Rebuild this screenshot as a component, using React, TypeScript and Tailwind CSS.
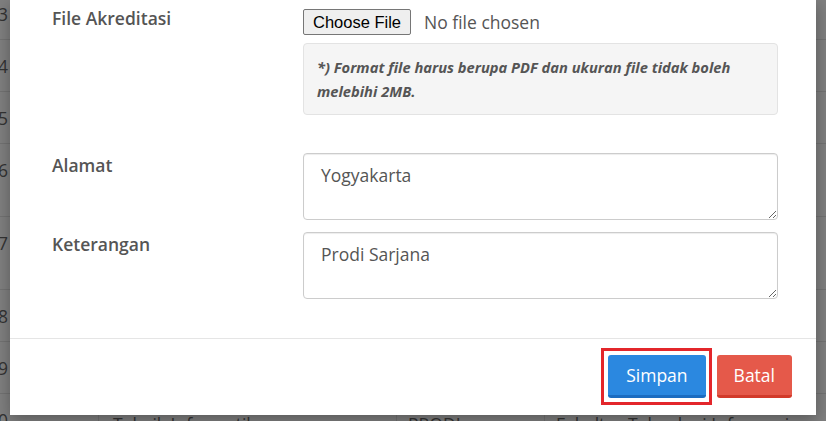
import React from "react";

const rows = [
  { no: 3, h: "h-[52px]", prodi: "Sistem Informasi", jenis: "PRODI", fak: "Fakultas Teknologi Informasi" },
  { no: 4, h: "h-[52px]", prodi: "Manajemen", jenis: "PRODI", fak: "Fakultas Ekonomi" },
  { no: 5, h: "h-[52px]", prodi: "Akuntansi", jenis: "PRODI", fak: "Fakultas Ekonomi" },
  { no: 6, h: "h-[73px]", prodi: "Teknik Komputer", jenis: "PRODI", fak: "Fakultas Teknologi Informasi" },
  { no: 7, h: "h-[73px]", prodi: "Desain Komunikasi Visual", jenis: "PRODI", fak: "Fakultas Seni" },
  { no: 8, h: "h-[52px]", prodi: "Ilmu Komunikasi", jenis: "PRODI", fak: "Fakultas Sosial" },
  { no: 9, h: "h-[52px]", prodi: "Hukum", jenis: "PRODI", fak: "Fakultas Hukum" },
  { no: 10, h: "h-[60px]", prodi: "Teknik Informatika", jenis: "PRODI", fak: "Fakultas Teknologi Informasi" },
];

export default function App() {
  return (
    <div className="relative h-[421px] w-[826px] overflow-hidden bg-[#7f7f7f] font-['Open_Sans',sans-serif]">
      {/* table behind the backdrop */}
      <div className="-mt-[12px] -ml-[30px] flex flex-col text-[17.5px] leading-[25px] text-[#333]">
        {rows.map((r) => (
          <div key={r.no} className={`flex border-b border-[#727272] ${r.h}`}>
            <div className="w-[38px] pt-[14px] text-right">{r.no}</div>
            <div className="w-[90px]" />
            <div className="w-[298px] border-l border-[#727272] pl-[14px] pt-[18px]">{r.prodi}</div>
            <div className="w-[148px] border-l border-[#727272] pl-[11px] pt-[18px]">{r.jenis}</div>
            <div className="flex-1 border-l border-[#727272] pl-[11px] pt-[18px] whitespace-nowrap">{r.fak}</div>
          </div>
        ))}
      </div>

      {/* modal */}
      <div className="absolute left-[10px] top-0 w-[806px] bg-white shadow-[0_5px_15px_rgba(0,0,0,0.3)]">
        <div className="pl-[42px] pr-[38px] pt-[6px] pb-[39px]">
          <div className="mb-[38px] flex">
            <label className="w-[251px] text-[17.5px] leading-[25px] font-semibold text-[#555]">File Akreditasi</label>
            <div className="flex-1">
              <label className="mt-[3px] flex items-center">
                <input type="file" className="hidden" />
                <span className="flex h-[26px] items-center rounded-[2px] border border-[#767676] bg-[#efefef] px-[9px] font-['Liberation_Sans',Arial,sans-serif] text-[16.5px] text-black">
                  Choose File
                </span>
                <span className="ml-[13px] text-[17.5px] text-[#555]">No file chosen</span>
              </label>
              <div className="mt-[8px] rounded-[4px] border border-[#e3e3e3] bg-[#f5f5f5] px-[13px] py-[11px] text-[14.7px] leading-[24px] font-bold italic text-[#555]">
                *) Format file harus berupa PDF dan ukuran file tidak boleh melebihi 2MB.
              </div>
            </div>
          </div>

          <div className="mb-[12px] flex">
            <label className="w-[251px] text-[17.5px] leading-[25px] font-semibold text-[#555]">Alamat</label>
            <textarea
              defaultValue="Yogyakarta"
              className="h-[67px] flex-1 rounded-[4px] border border-[#ccc] px-[17px] pt-[9px] pb-[5px] text-[17.5px] leading-[25px] text-[#555] shadow-[inset_0_1px_1px_rgba(0,0,0,0.075)] outline-none"
            />
          </div>

          <div className="flex">
            <label className="w-[251px] text-[17.5px] leading-[25px] font-semibold text-[#555]">Keterangan</label>
            <textarea
              defaultValue="Prodi Sarjana"
              className="h-[67px] flex-1 rounded-[4px] border border-[#ccc] px-[17px] pt-[9px] pb-[5px] text-[17.5px] leading-[25px] text-[#555] shadow-[inset_0_1px_1px_rgba(0,0,0,0.075)] outline-none"
            />
          </div>
        </div>

        <div className="flex justify-end gap-[11px] border-t border-[#e5e5e5] pt-[16px] pb-[17px] pr-[24px]">
          <button className="relative h-[43px] rounded-[3px] border-b-[3px] border-[#1c6cc0] bg-[#2b88e0] px-[18px] text-[17.5px] text-white after:absolute after:top-[-7px] after:bottom-[-10px] after:left-[-7px] after:right-[-6px] after:border-[3px] after:border-[#e3262b] after:content-['']">
            Simpan
          </button>
          <button className="h-[43px] rounded-[3px] border-b-[3px] border-[#d23a2a] bg-[#e5594a] px-[17px] text-[17.5px] text-white">
            Batal
          </button>
        </div>
      </div>
    </div>
  );
}
